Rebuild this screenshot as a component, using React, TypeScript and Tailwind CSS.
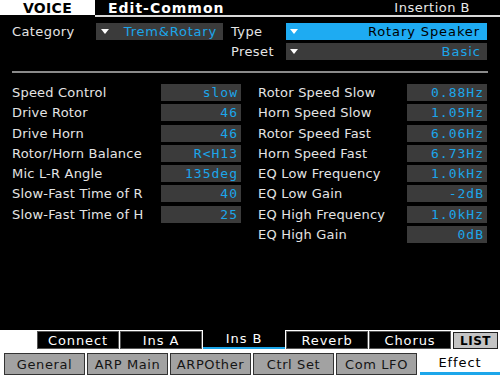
const params = [
  { left: ["Speed Control", "slow"], right: ["Rotor Speed Slow", "0.88Hz"] },
  { left: ["Drive Rotor", "46"], right: ["Horn Speed Slow", "1.05Hz"] },
  { left: ["Drive Horn", "46"], right: ["Rotor Speed Fast", "6.06Hz"] },
  { left: ["Rotor/Horn Balance", "R<H13"], right: ["Horn Speed Fast", "6.73Hz"] },
  { left: ["Mic L-R Angle", "135deg"], right: ["EQ Low Frequency", "1.0kHz"] },
  { left: ["Slow-Fast Time of R", "40"], right: ["EQ Low Gain", "-2dB"] },
  { left: ["Slow-Fast Time of H", "25"], right: ["EQ High Frequency", "1.0kHz"] },
  { left: null, right: ["EQ High Gain", "0dB"] },
];

const topTabs = ["Connect", "Ins A", "Ins B", "Reverb", "Chorus"];
const bottomTabs = ["General", "ARP Main", "ARPOther", "Ctrl Set", "Com LFO", "Effect"];

const Arrow = ({ dark = false }: { dark?: boolean }) => (
  <svg width="8" height="5" viewBox="0 0 8 5" className="shrink-0">
    <path d="M0 0H8L4 5Z" fill={dark ? "#000" : "#fff"} />
  </svg>
);

const ParamRow = ({ label, value }: { label: string; value: string }) => (
  <div className="flex items-center h-[17px]">
    <span className="flex-1 text-[13px] tracking-[0.2px] text-[#e4e4e4]">{label}</span>
    <span className="w-[80px] h-full bg-[#3b3b3b] flex items-center justify-end pr-[3px] font-['DejaVu_Sans_Mono',monospace] text-[13px] tracking-[1px] text-[#1ca6ea]">
      {value}
    </span>
  </div>
);

export default function App() {
  return (
    <div className="w-[500px] h-[375px] bg-black flex flex-col overflow-hidden font-['DejaVu_Sans',sans-serif] leading-none select-none">
      {/* title bar */}
      <div className="flex items-start h-[17px]">
        <div className="w-[95px] h-[15px] bg-white text-black font-bold text-[14px] tracking-[0.3px] flex items-center justify-center">
          VOICE
        </div>
        <div className="flex-1 h-[17px] border-b-2 border-[#d8d8d8] flex items-center">
          <span className="pl-[13px] text-white font-bold text-[14px] tracking-[1px]">Edit-Common</span>
          <span className="ml-auto mr-[30px] text-[#e8e8e8] text-[13px] tracking-[0.5px]">Insertion B</span>
        </div>
      </div>

      {/* category / type / preset */}
      <div className="mt-[6px] pl-[12px] grid grid-cols-[84px_127px_8px_55px_201px] grid-rows-[17px_17px] gap-y-[3px] text-[13px]">
        <span className="self-center text-[#e4e4e4] tracking-[0.4px]">Category</span>
        <div className="bg-[#3b3b3b] flex items-center pl-[5px] pr-[6px]">
          <Arrow />
          <span className="ml-auto text-[#1ca6ea] tracking-[0.8px]">Trem&amp;Rotary</span>
        </div>
        <span />
        <span className="self-center text-[#e4e4e4] tracking-[0.4px]">Type</span>
        <div className="bg-[#1eabf2] flex items-center pl-[4px] pr-[7px]">
          <Arrow />
          <span className="ml-auto text-black tracking-[0.9px]">Rotary Speaker</span>
        </div>
        <span className="col-start-4 self-center text-[#e4e4e4] tracking-[0.4px]">Preset</span>
        <div className="bg-[#3b3b3b] flex items-center pl-[4px] pr-[6px]">
          <Arrow />
          <span className="ml-auto text-[#1ca6ea] tracking-[1px]">Basic</span>
        </div>
      </div>

      <div className="mt-[11px] mx-[12px] h-[2px] bg-[#8a8a8a]" />

      {/* parameter list */}
      <div className="mt-[11px] pl-[12px] pr-[13px] grid grid-cols-2 gap-x-[17px] gap-y-[3.3px]">
        {params.map((p, i) => (
          <div key={i} className="contents">
            {p.left ? <ParamRow label={p.left[0]} value={p.left[1]} /> : <div />}
            <ParamRow label={p.right[0]} value={p.right[1]} />
          </div>
        ))}
      </div>

      <div className="flex-1" />

      {/* tabs */}
      <div className="h-[45px] bg-white flex flex-col text-[13px]">
        <div className="h-[23px] flex items-start">
          <div className="w-[37px]" />
          {topTabs.map((t) =>
            t === "Ins B" ? (
              <div
                key={t}
                className="w-[82px] mr-[1px] h-[19px] bg-black border-b-2 border-[#1ca6ea] text-white flex items-center justify-center tracking-[0.9px]"
              >
                {t}
              </div>
            ) : (
              <div
                key={t}
                className="w-[82px] mr-[1px] mt-[1px] h-[18px] bg-black border border-[#555] text-white flex items-center justify-center tracking-[0.9px]"
              >
                {t}
              </div>
            )
          )}
          <div className="ml-[1px] mt-[2px] w-[45px] h-[17px] bg-[#c4c4c4] border border-[#222] text-black font-bold text-[12px] flex items-center justify-center tracking-[0.5px]">
            LIST
          </div>
        </div>
        <div className="flex-1 flex items-stretch pl-[4px]">
          {bottomTabs.map((t) =>
            t === "Effect" ? (
              <div
                key={t}
                className="flex-1 ml-[1px] bg-white border-b-[3px] border-[#1ca6ea] text-black flex items-center justify-center tracking-[0.9px]"
              >
                {t}
              </div>
            ) : (
              <div
                key={t}
                className="w-[81px] mr-[2px] bg-[#a2a2a2] border border-[#333] text-[#151515] flex items-center justify-center tracking-[0.6px]"
              >
                {t}
              </div>
            )
          )}
        </div>
      </div>
    </div>
  );
}
